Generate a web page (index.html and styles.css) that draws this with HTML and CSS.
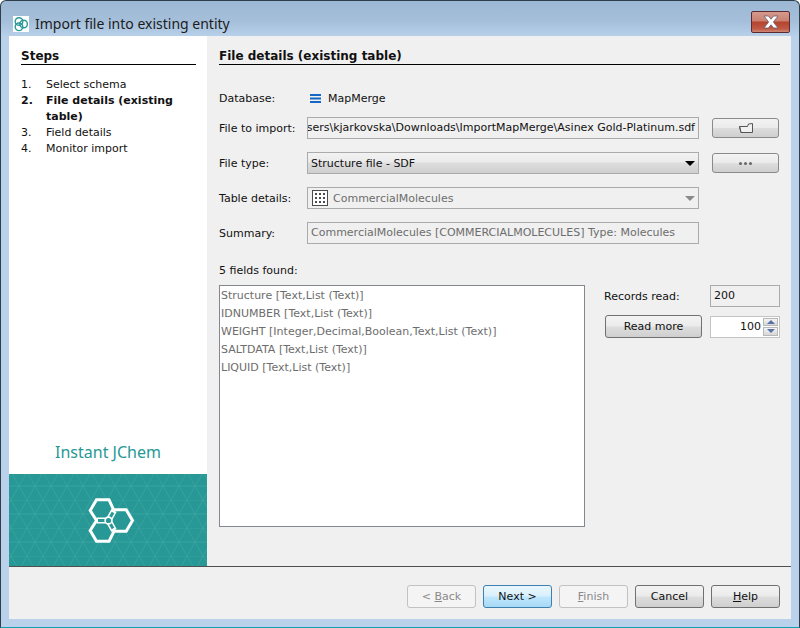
FILE: index.html
```html
<!DOCTYPE html>
<html lang="en">
<head>
<meta charset="utf-8">
<title>Import file into existing entity</title>
<link rel="stylesheet" href="styles.css">
</head>
<body>
<div class="window">
  <header class="titlebar">
    <span class="app-icon">
      <svg width="16" height="16" viewBox="0 0 16 16"><g fill="none" stroke="#2a9a96" stroke-width="1.4"><circle cx="6" cy="5.5" r="3.8"/><circle cx="6" cy="10.8" r="3.8"/><circle cx="10.6" cy="8" r="3.8"/></g></svg>
    </span>
    <span class="title">Import file into existing entity</span>
    <button class="close" aria-label="Close">
      <svg width="18" height="14" viewBox="0 0 18 14"><path d="M2 1h4.4L9 4.2 11.6 1H16l-4.6 6 4.6 6h-4.4L9 9.8 6.4 13H2l4.6-6z" fill="#fff" stroke="#6a5a6a" stroke-width=".8"/></svg>
    </button>
  </header>
  <div class="client">
    <div class="main">
      <aside class="sidebar">
        <div class="steps">
          <h2 class="heading">Steps</h2>
          <ol class="step-list">
            <li class="step"><span class="num">1.</span><span>Select schema</span></li>
            <li class="step current"><span class="num">2.</span><span>File details (existing table)</span></li>
            <li class="step"><span class="num">3.</span><span>Field details</span></li>
            <li class="step"><span class="num">4.</span><span>Monitor import</span></li>
          </ol>
        </div>
        <div class="brand">Instant JChem</div>
        <div class="banner">
          <svg width="198" height="92" viewBox="0 0 198 92">
            <defs>
              <pattern id="tri" width="16" height="28" patternUnits="userSpaceOnUse" patternTransform="translate(2 -2)">
                <path d="M0 0H16M0 14H16M0 0L8 14L16 0M0 28L8 14L16 28" stroke="#46a9a5" stroke-width="1" fill="none" opacity=".5"/>
              </pattern>
            </defs>
            <rect width="198" height="92" fill="#279895"/>
            <rect width="198" height="92" fill="url(#tri)"/>
            <g transform="translate(-9 -474)">
              <path d="M113.7 510L109 499.7H96.5L90.2 510.5L96.5 520.5L90.2 530.5L96.5 541.3H109L114 531.3H126.2L132.5 520.5L126.2 509.7H113.7Z" fill="#279895" stroke="#fff" stroke-width="3" stroke-linejoin="miter"/>
              <path d="M108.5 520.5H96.5M108.5 520.5L114 510.5M108.5 520.5L114 530.5" stroke="#fff" stroke-width="6" fill="none"/>
              <path d="M108.5 520.5H98M108.5 520.5L113 512.5M108.5 520.5L113 528.5" stroke="#279895" stroke-width="3" fill="none"/>
              <circle cx="108.5" cy="520.5" r="3.4" fill="#279895" stroke="#fff" stroke-width="1.6"/>
            </g>
          </svg>
        </div>
      </aside>
      <section class="content">
        <h2 class="heading">File details (existing table)</h2>
        <div class="form">
          <span class="label first">Database:</span>
          <span class="db">
            <svg width="11" height="9" viewBox="0 0 11 9"><path d="M0 0h11v2H0zM0 3.5h11v2H0zM0 7h11v2H0z" fill="#1467c4"/></svg>
            MapMerge
          </span>
          <span></span>

          <span class="label">File to import:</span>
          <div class="field file-field"><span class="file-path">C:\Users\kjarkovska\Downloads\ImportMapMerge\Asinex Gold-Platinum.sdf</span></div>
          <button class="btn small" aria-label="Browse">
            <svg class="folder" width="14" height="10" viewBox="0 0 14 10"><path d="M.5 3.5h8l1-2.5 4-.5v9H2z" fill="#f0f0f0" stroke="#555" stroke-width="1"/><path d="M.5 3.5L2 9.5" stroke="#555" fill="none"/></svg>
          </button>

          <span class="label">File type:</span>
          <div class="combo"><span>Structure file - SDF</span><i class="arrow"></i></div>
          <button class="btn small dots" aria-label="More"><i></i><i></i><i></i></button>

          <span class="label">Table details:</span>
          <div class="combo disabled">
            <svg class="grid-icon" width="16" height="16" viewBox="0 0 16 16"><rect x=".5" y=".5" width="15" height="15" fill="#fff" stroke="#4a4a4a"/><path d="M3 3h2v2H3zM7 3h2v2H7zM11 3h2v2h-2zM3 7h2v2H3zM7 7h2v2H7zM11 7h2v2h-2zM3 11h2v2H3zM7 11h2v2H7zM11 11h2v2h-2z" fill="#4a4a4a"/></svg>
            <span>CommercialMolecules</span><i class="arrow"></i>
          </div>
          <span></span>

          <span class="label">Summary:</span>
          <div class="field muted">CommercialMolecules [COMMERCIALMOLECULES] Type: Molecules</div>
          <span></span>
        </div>
        <div class="found">5 fields found:</div>
        <div class="lower">
          <ul class="fields">
            <li>Structure [Text,List (Text)]</li>
            <li>IDNUMBER [Text,List (Text)]</li>
            <li>WEIGHT [Integer,Decimal,Boolean,Text,List (Text)]</li>
            <li>SALTDATA [Text,List (Text)]</li>
            <li>LIQUID [Text,List (Text)]</li>
          </ul>
          <div class="records">
            <span class="label">Records read:</span>
            <div class="field">200</div>
            <button class="btn more">Read more</button>
            <div class="spinner">
              <span class="spin-value">100</span>
              <span class="spin-btns"><i class="up"></i><i class="down"></i></span>
            </div>
          </div>
        </div>
      </section>
    </div>
    <footer class="footer">
      <button class="btn wide off">&lt; <u>B</u>ack</button>
      <button class="btn wide primary">Next &gt;</button>
      <button class="btn wide off"><u>F</u>inish</button>
      <button class="btn wide">Cancel</button>
      <button class="btn wide"><u>H</u>elp</button>
    </footer>
  </div>
</div>
</body>
</html>
```
FILE: styles.css
```css
* { box-sizing: border-box; }
html, body { margin: 0; height: 100%; background: #fff; }
body { font-family: "DejaVu Sans", "Noto Sans", sans-serif; font-size: 11px; color: #111; overflow: hidden; }

.window {
  width: 800px; height: 628px;
  display: flex; flex-direction: column;
  padding: 0 8px 8px;
  background: linear-gradient(#9db8d4 0, #a5bfda 20px, #b9d1ea 36px, #b9d1ea 100%);
  border: 1px solid #2f3f4a;
  border-bottom-color: #12a0b0;
  border-radius: 6px 6px 0 0;
}

.titlebar { height: 35px; flex: none; display: flex; align-items: center; position: relative; }
.app-icon { width: 16px; height: 16px; background: #fff; margin-left: 4px; display: block; margin-top: 10px; }
.app-icon svg { display: block; }
.title { font-family: "Noto Sans", sans-serif; font-size: 14px; margin-left: 6px; margin-top: 10px; color: #1c1c1c; }
.close {
  position: absolute; right: 1px; top: 10px;
  width: 39px; height: 22px; padding: 0;
  border: 1px solid #5b2a33; border-radius: 2px;
  background: linear-gradient(#d59a8c 0, #c9806f 45%, #b5432d 50%, #c05a45 85%, #cf8a78 100%);
  display: flex; align-items: center; justify-content: center;
}

.client { flex: 1; display: flex; flex-direction: column; background: #f0f0f0; min-height: 0; }
.main { flex: 1; display: flex; min-height: 0; border-bottom: 1px solid #505050; }

.sidebar { width: 198px; flex: none; background: #fff; display: flex; flex-direction: column; }
.steps { flex: 1; padding: 12px 11px 0 12px; }
.heading { margin: 0; font-size: 12px; font-weight: 700; line-height: 16px; border-bottom: 1px solid #000; height: 17px; color: #111; }
.step-list { list-style: none; margin: 12px 0 0; padding: 0; }
.step { display: flex; line-height: 16px; }
.step .num { width: 25px; flex: none; }
.step.current { font-weight: 700; }
.brand { font-family: "Noto Sans", sans-serif; text-align: center; color: #279895; font-size: 16px; line-height: 24px; height: 24px; margin-bottom: 10px; }
.banner { height: 92px; flex: none; }
.banner svg { display: block; }

.content { flex: 1; padding: 12px 11px 0 12px; min-width: 0; }
.form {
  display: grid;
  grid-template-columns: 88px 392px 67px;
  row-gap: 13px;
  margin-top: 28px;
  align-items: center;
}
.form > .btn { margin-left: 13px; }
.label { white-space: nowrap; }
.first { line-height: 11px; }
.db { display: flex; align-items: center; gap: 7px; height: 11px; padding-left: 3px; }
.field {
  height: 22px; border: 1px solid #ababab; background: #f0f0f0;
  line-height: 20px; padding: 0 3px; overflow: hidden; white-space: nowrap;
}
.file-field { display: flex; justify-content: flex-end; }
.file-path { flex: none; }
.muted { color: #6d6d6d; }
.combo {
  height: 22px; border: 1px solid #ababab; padding: 0 3px;
  display: flex; align-items: center; position: relative;
  background: linear-gradient(#f2f2f2 0, #ebebeb 45%, #dddddd 50%, #cfcfcf 100%);
}
.arrow {
  position: absolute; right: 3px; top: 8px;
  border-left: 5px solid transparent; border-right: 5px solid transparent;
  border-top: 5px solid #000;
}
.combo.disabled { background: #f0f0f0; color: #6d6d6d; }
.combo.disabled .arrow { border-top-color: #8a8a8a; }
.grid-icon { margin: 0 5px 0 1px; flex: none; }

.btn {
  font: inherit; color: #111; padding: 0; display: block; text-align: center;
  border: 1px solid #707070; border-radius: 3px;
  background: linear-gradient(#f3f3f3 0, #ebebeb 48%, #dddddd 52%, #cfcfcf 100%);
}
.btn.small { height: 20px; width: 67px; border-color: #8a8a8a; }
.folder { display: block; margin: 0 auto; }
.btn.dots { display: flex; align-items: center; justify-content: center; gap: 2px; }
.dots i { width: 3px; height: 3px; background: #666; border-radius: 50%; display: block; }

.found { margin-top: 18px; line-height: 18px; height: 18px; }
.lower { display: flex; margin-top: 5px; }
.fields {
  list-style: none; margin: 0; padding: 1px 0 0 1px;
  width: 366px; height: 242px; background: #fff;
  border: 1px solid #828790; color: #6d6d6d;
}
.fields li { line-height: 18px; }
.records {
  margin-left: 19px;
  display: grid; grid-template-columns: 106px 70px; row-gap: 8px;
  align-self: flex-start; align-items: center;
}
.more { width: 97px; height: 23px; margin-left: 1px; }
.spinner { height: 22px; background: #fff; border: 1px solid #c4c4c4; display: flex; align-items: center; justify-content: flex-end; }
.spin-value { margin-right: 2px; }
.spin-btns { display: flex; flex-direction: column; width: 15px; height: 18px; margin-right: 1px; gap: 1px; }
.spin-btns i { flex: 1; display: flex; align-items: center; justify-content: center; background: linear-gradient(#f4f4f4, #d6d6d6); border: 1px solid #b8b8b8; }
.up::after { content: ""; border-left: 4px solid transparent; border-right: 4px solid transparent; border-bottom: 4px solid #5a6ea8; }
.down::after { content: ""; border-left: 4px solid transparent; border-right: 4px solid transparent; border-top: 4px solid #5a6ea8; }

.footer { height: 52px; flex: none; display: flex; justify-content: flex-end; gap: 7px; padding: 18px 11px 0 0; }
.btn.wide { width: 69px; height: 23px; }
.btn.off { color: #8a8a8a; background: #f4f4f4; border-color: #c2c2c2; }
.btn.primary { border-color: #3c7fb1; background: linear-gradient(#eaf6fd 0, #d9f0fc 48%, #bee6fd 52%, #a7d9f5 100%); }
```
